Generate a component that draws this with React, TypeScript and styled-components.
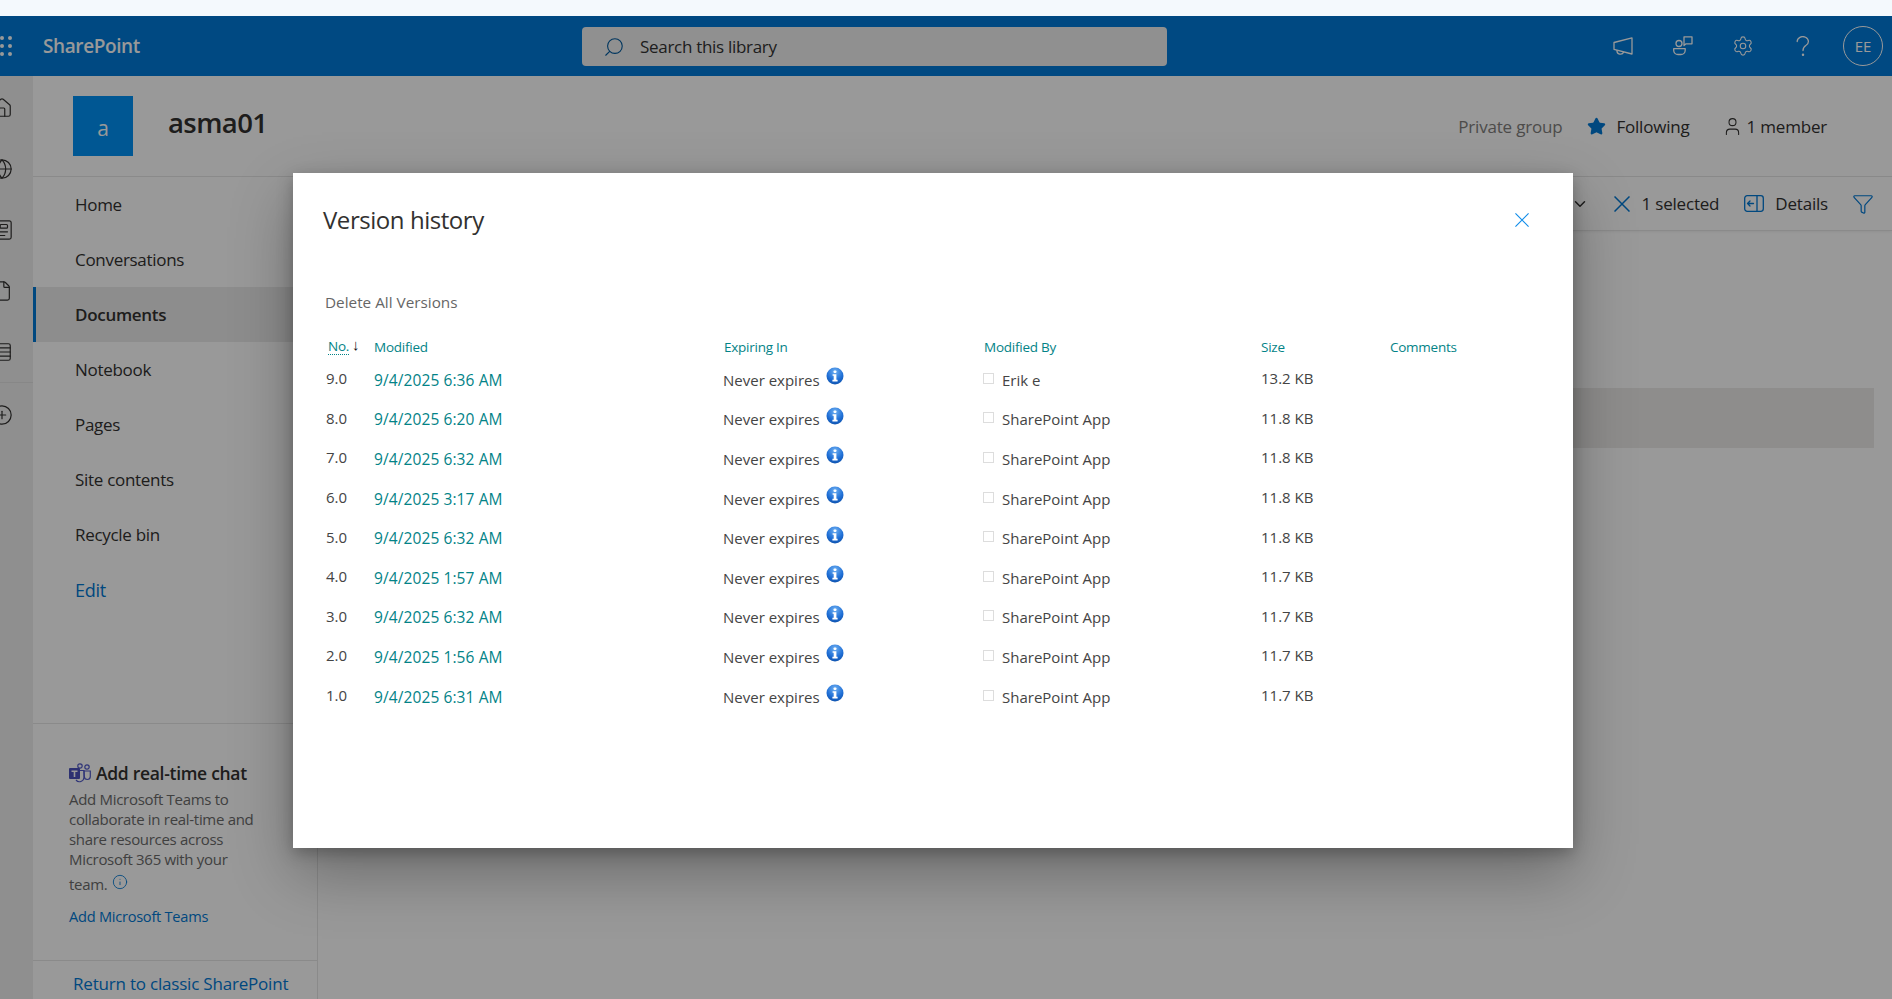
import styled, { createGlobalStyle } from "styled-components";
import { Home, Globe, Newspaper, File, Rows4, CirclePlus, Search, Settings, Star, User, ChevronDown, Filter, Info } from "lucide-react";

const GlobalStyle = createGlobalStyle`
  html, body {
    margin: 0;
    padding: 0;
    height: 100%;
    overflow: hidden;
    background: #f4f9fd;
    font-family: "Open Sans", "Noto Sans", sans-serif;
    color: #323130;
  }
`;

const Strip = styled.div`
  height: 16px;
  background: #f4f9fd;
`;
const Page = styled.div`
  position: relative;
  width: 1892px;
  height: 983px;
  overflow: hidden;
  background: #fff;
  display: flex;
  flex-direction: column;
`;
const SuiteBar = styled.header`
  height: 60px;
  flex: none;
  background: #007ad9;
  display: flex;
  align-items: center;
  color: #fff;
`;
const Waffle = styled.div`
  display: grid;
  grid-template-columns: repeat(2, 4px);
  gap: 4px 4px;
  width: 43px;
  span {
    width: 4px;
    height: 4px;
    border-radius: 50%;
    background: #fff;
  }
`;
const Brand = styled.div`
  font-size: 19px;
  font-weight: 600;
  width: 539px;
  letter-spacing: -0.4px;
`;
const SearchBox = styled.div`
  width: 585px;
  height: 39px;
  border-radius: 4px;
  background: #f0f0f0;
  display: flex;
  align-items: center;
  color: #333;
  font-size: 17px;
  letter-spacing: -0.3px;
  padding-top: 1px;
  box-sizing: border-box;
  svg {
    margin: 0 15px 0 21px;
    transform: scaleX(-1);
    color: #005a9e;
  }
`;
const SuiteIcons = styled.div`
  margin-left: auto;
  display: flex;
  align-items: center;
  margin-right: 9px;
`;
const SuiteIcon = styled.div`
  width: 60px;
  display: flex;
  justify-content: center;
`;
const Avatar = styled.div`
  width: 38px;
  height: 38px;
  margin-left: 10px;
  border: 1px solid #fff;
  border-radius: 50%;
  display: flex;
  align-items: center;
  justify-content: center;
  font-size: 15px;
`;
const Body = styled.div`
  flex: 1;
  display: flex;
  min-height: 0;
`;
const Rail = styled.nav`
  width: 33px;
  flex: none;
  background: #eeeeee;
  display: flex;
  flex-direction: column;
  align-items: flex-start;
  padding-top: 21px;
  overflow: hidden;
  color: #323130;
`;
const RailIcon = styled.div`
  height: 61px;
  flex: none;
  margin-left: -9px;
`;
const RailLine = styled.div`
  width: 100%;
  height: 1px;
  background: #e2e2e2;
  margin: -20px 0 21px;
`;
const Main = styled.div`
  flex: 1;
  display: flex;
  flex-direction: column;
  min-width: 0;
`;
const SiteHeader = styled.div`
  height: 101px;
  flex: none;
  display: flex;
  align-items: center;
  padding: 0 65px 1px 40px;
  border-bottom: 1px solid #e6e6e6;
  box-sizing: border-box;
`;
const SiteLogo = styled.div`
  width: 60px;
  height: 60px;
  background: #0092f5;
  color: #fff;
  font-size: 21px;
  display: flex;
  align-items: center;
  justify-content: center;
  padding-top: 4px;
  box-sizing: border-box;
`;
const SiteName = styled.h1`
  margin: 0 0 7px 35px;
  font-size: 27.5px;
  font-weight: 600;
  letter-spacing: -0.6px;
`;
const SiteMeta = styled.div`
  margin-left: auto;
  display: flex;
  align-items: center;
  font-size: 17px;
  letter-spacing: -0.2px;
  margin-top: 2px;
`;
const Muted = styled.span`
  color: #807e7c;
  margin-right: 25px;
`;
const MetaItem = styled.span<{ $gap: number }>`
  display: flex;
  align-items: center;
  gap: ${(p) => p.$gap}px;
  margin-right: ${(p) => (p.$gap > 8 ? 32 : 0)}px;
`;
const Columns = styled.div`
  flex: 1;
  display: flex;
  min-height: 0;
`;
const LeftNav = styled.aside`
  width: 285px;
  flex: none;
  box-sizing: border-box;
  border-right: 1px solid #e6e6e6;
  display: flex;
  flex-direction: column;
`;
const NavItem = styled.div<{ $active?: boolean; $link?: boolean }>`
  height: 55px;
  flex: none;
  box-sizing: border-box;
  display: flex;
  align-items: center;
  padding-left: ${(p) => (p.$active ? 39 : 42)}px;
  border-left: ${(p) => (p.$active ? "3px solid #0078d4" : "none")};
  background: ${(p) => (p.$active ? "#ebebeb" : "transparent")};
  font-weight: ${(p) => (p.$active ? 600 : 400)};
  font-size: ${(p) => (p.$link ? 18 : 17)}px;
  color: ${(p) => (p.$link ? "#0078d4" : "#323130")};
  letter-spacing: -0.3px;
`;
const TeamsCard = styled.section`
  margin-top: auto;
  height: 238px;
  box-sizing: border-box;
  border-top: 1px solid #e6e6e6;
  border-bottom: 1px solid #e6e6e6;
  padding: 37px 0 0 36px;
`;
const TeamsTitle = styled.div`
  display: flex;
  align-items: center;
  gap: 5px;
  font-size: 17.5px;
  font-weight: 600;
  letter-spacing: -0.3px;
  height: 24px;
`;
const TeamsText = styled.p`
  margin: 4px 0 0;
  width: 205px;
  font-size: 15px;
  line-height: 20px;
  color: #6b6b6b;
  letter-spacing: -0.3px;
`;
const TeamsEnd = styled.span`
  display: inline-flex;
  align-items: center;
  gap: 5px;
  line-height: 31px;
  svg {
    color: #0078d4;
    margin-bottom: 6px;
  }
`;
const TeamsLink = styled.div`
  font-size: 14.6px;
  color: #0078d4;
  margin-top: 6px;
  letter-spacing: -0.25px;
`;
const ClassicLink = styled.div`
  height: 38px;
  flex: none;
  padding-left: 40px;
  font-size: 17px;
  color: #0078d4;
  line-height: 46px;
  letter-spacing: -0.2px;
`;
const Content = styled.div`
  flex: 1;
  min-width: 0;
  display: flex;
  flex-direction: column;
`;
const CommandBar = styled.div`
  height: 54px;
  flex: none;
  box-sizing: border-box;
  border-bottom: 1px solid #e6e6e6;
  display: flex;
  align-items: center;
  justify-content: flex-end;
  padding: 0 18px 0 0;
  font-size: 17px;
  letter-spacing: -0.2px;
  box-shadow: 0 1px 3px rgba(0, 0, 0, 0.06);
`;
const Command = styled.span<{ $gap: number; $after: number }>`
  display: flex;
  align-items: center;
  gap: ${(p) => p.$gap}px;
  margin-right: ${(p) => p.$after}px;
  svg {
    color: #0078d4;
  }
`;
const DarkChevron = styled(ChevronDown)`
  color: #323130;
  margin-right: 25px;
`;
const SelectedRow = styled.div`
  height: 60px;
  margin: 157px 18px 0 0;
  background: #edebe9;
`;
const Dim = styled.div`
  position: absolute;
  inset: 0;
  background: rgba(0, 0, 0, 0.4);
`;
const Modal = styled.div`
  position: absolute;
  left: 293px;
  top: 157px;
  width: 1280px;
  height: 675px;
  box-sizing: border-box;
  background: #fff;
  box-shadow: 0 25px 58px rgba(0, 0, 0, 0.3), 0 5px 15px rgba(0, 0, 0, 0.25);
  padding: 30px 30px 0 30px;
`;
const ModalHead = styled.div`
  display: flex;
  align-items: center;
  justify-content: space-between;
  height: 33px;
`;
const ModalTitle = styled.h2`
  margin: 0;
  font-size: 24px;
  font-weight: 500;
  letter-spacing: -0.45px;
  color: #323130;
`;
const CloseIcon = styled.svg`
  color: #0f8ce9;
  margin: 2px 14px 0 0;
`;
const DeleteAll = styled.div`
  margin: 55px 0 0 2px;
  height: 22px;
  line-height: 22px;
  font-size: 15.3px;
  color: #666;
`;
const Grid = styled.div`
  display: grid;
  grid-template-columns: 48px 350px 260px 277px 129px 1fr;
  margin: 20px 0 0 3px;
`;
const HeadCell = styled.div`
  height: 27px;
  display: flex;
  align-items: center;
  font-size: 13.5px;
  color: #038387;
  letter-spacing: -0.25px;
`;
const NoLabel = styled.span`
  border-bottom: 1px dotted #038387;
  margin-left: 2px;
  line-height: 15px;
`;
const SortArrow = styled.span`
  color: #111;
  font-size: 15px;
  margin: 0 0 5px 3px;
  font-weight: 600;
`;
const Cell = styled.div<{ $raised?: boolean }>`
  height: 39.6px;
  display: flex;
  align-items: center;
  font-size: 15px;
  color: #444;
  padding-bottom: ${(p) => (p.$raised ? 3 : 0)}px;
  box-sizing: border-box;
`;
const DateCell = styled(Cell)`
  color: #038387;
  font-size: 15.5px;
  letter-spacing: 0.1px;
`;
const ExpiryCell = styled(Cell)`
  margin-left: -1px;
`;
const InfoDot = styled.svg`
  margin: 0 0 7px 6px;
`;
const Placeholder = styled.span`
  width: 9px;
  height: 9px;
  border: 1px solid #ddd;
  margin: 0 8px 3px -1px;
`;

const navItems = ["Home", "Conversations", "Documents", "Notebook", "Pages", "Site contents", "Recycle bin"];
const versions = [
  ["9.0", "9/4/2025 6:36 AM", "Erik e", "13.2 KB"],
  ["8.0", "9/4/2025 6:20 AM", "SharePoint App", "11.8 KB"],
  ["7.0", "9/4/2025 6:32 AM", "SharePoint App", "11.8 KB"],
  ["6.0", "9/4/2025 3:17 AM", "SharePoint App", "11.8 KB"],
  ["5.0", "9/4/2025 6:32 AM", "SharePoint App", "11.8 KB"],
  ["4.0", "9/4/2025 1:57 AM", "SharePoint App", "11.7 KB"],
  ["3.0", "9/4/2025 6:32 AM", "SharePoint App", "11.7 KB"],
  ["2.0", "9/4/2025 1:56 AM", "SharePoint App", "11.7 KB"],
  ["1.0", "9/4/2025 6:31 AM", "SharePoint App", "11.7 KB"],
];

function InfoBadge({ id }: { id: string }) {
  return (
    <InfoDot width="18" height="18" viewBox="0 0 18 18">
      <defs>
        <radialGradient id={id} cx="50%" cy="25%" r="80%">
          <stop offset="0" stopColor="#6fb0f2" />
          <stop offset="0.6" stopColor="#1f6fd6" />
          <stop offset="1" stopColor="#0d4fa8" />
        </radialGradient>
      </defs>
      <circle cx="9" cy="9" r="8.5" fill={`url(#${id})`} />
      <rect x="7.6" y="3.4" width="2.8" height="2.6" rx="0.8" fill="#fff" />
      <path d="M6.6 7.2h3.8v5.6h1.2v1.6H6.400v-1.6h1.300V8.800H6.600z" fill="#fff" />
    </InfoDot>
  );
}

function Cross({ size, width }: { size: number; width: number }) {
  return (
    <svg width={size} height={size} viewBox="0 0 16 16" fill="none" stroke="currentColor" strokeWidth={width}>
      <path d="M0.500 0.500l15 15M15.500 0.500l-15 15" />
    </svg>
  );
}

function MegaphoneIcon() {
  return (
    <svg width="20" height="18" viewBox="0 0 20 18" fill="none" stroke="currentColor" strokeWidth="1.300" strokeLinejoin="round">
      <path d="M1 5.500L19 0.800V17L1 12.300z" />
      <path d="M4 13.200a3.500 3.500 0 0 0 6.700 1.800" />
    </svg>
  );
}

function ChatIcon() {
  return (
    <svg width="20" height="20" viewBox="0 0 20 20" fill="none" stroke="currentColor" strokeWidth="1.300" strokeLinejoin="round">
      <circle cx="6" cy="7.500" r="3" />
      <path d="M0.700 12.700h11.500v1.500a4.300 4.300 0 0 1-4.300 4.300H5a4.300 4.300 0 0 1-4.300-4.300z" />
      <path d="M11 0.800h8v7h-6l-2 1.700z" />
    </svg>
  );
}

function HelpIcon() {
  return (
    <svg width="14" height="21" viewBox="0 0 14 21" fill="none" stroke="currentColor" strokeWidth="1.300" strokeLinecap="round">
      <path d="M1.200 5.500a5.600 4.800 0 1 1 8.600 4c-2 1.300-2.800 2.300-2.800 5" />
      <circle cx="7" cy="18.800" r="0.600" fill="currentColor" />
    </svg>
  );
}

function DetailsIcon() {
  return (
    <svg width="20" height="17" viewBox="0 0 20 17" fill="none" stroke="currentColor" strokeWidth="1.300" strokeLinecap="round" strokeLinejoin="round">
      <rect x="0.700" y="0.700" width="18.600" height="15.600" rx="2.500" />
      <path d="M13 0.700v15.600M9.500 8.500H3.500M6 6L3.500 8.500 6 11" />
    </svg>
  );
}

function TeamsLogo() {
  return (
    <svg width="22" height="20" viewBox="0 0 22 20">
      <circle cx="18" cy="4" r="2.200" fill="none" stroke="#5059c9" strokeWidth="1.200" />
      <path d="M15 8h6.300v5.500a3 3 0 0 1-6 0z" fill="none" stroke="#5059c9" strokeWidth="1.200" />
      <circle cx="11" cy="3" r="2.200" fill="none" stroke="#5059c9" strokeWidth="1.200" />
      <path d="M7 7.500h8v7a4.500 4.500 0 0 1-8 2.500" fill="none" stroke="#5059c9" strokeWidth="1.200" />
      <rect x="0" y="5" width="11" height="11" rx="1" fill="#4b53bc" />
      <path d="M2.500 7.500h6v1.500H6.300v5H4.700V9H2.500z" fill="#fff" />
    </svg>
  );
}

function Row({ no, date, by, size }: { no: string; date: string; by: string; size: string }) {
  return (
    <>
      <Cell $raised>{no}</Cell>
      <DateCell>{date}</DateCell>
      <ExpiryCell>
        Never expires
        <InfoBadge id={`info-${no}`} />
      </ExpiryCell>
      <Cell>
        <Placeholder />
        {by}
      </Cell>
      <Cell $raised>{size}</Cell>
      <Cell />
    </>
  );
}

export default function App() {
  return (
    <>
      <GlobalStyle />
      <Strip />
      <Page>
        <SuiteBar>
          <Waffle>
            {Array.from({ length: 6 }).map((_, i) => (
              <span key={i} />
            ))}
          </Waffle>
          <Brand>SharePoint</Brand>
          <SearchBox>
            <Search size={22} strokeWidth={1.2} />
            Search this library
          </SearchBox>
          <SuiteIcons>
            <SuiteIcon>
              <MegaphoneIcon />
            </SuiteIcon>
            <SuiteIcon>
              <ChatIcon />
            </SuiteIcon>
            <SuiteIcon>
              <Settings size={22} strokeWidth={1.2} />
            </SuiteIcon>
            <SuiteIcon>
              <HelpIcon />
            </SuiteIcon>
            <Avatar>EE</Avatar>
          </SuiteIcons>
        </SuiteBar>
        <Body>
          <Rail>
            <RailIcon>
              <Home size={22} strokeWidth={1.3} />
            </RailIcon>
            <RailIcon>
              <Globe size={22} strokeWidth={1.3} />
            </RailIcon>
            <RailIcon>
              <Newspaper size={22} strokeWidth={1.3} />
            </RailIcon>
            <RailIcon>
              <File size={22} strokeWidth={1.3} />
            </RailIcon>
            <RailIcon>
              <Rows4 size={22} strokeWidth={1.3} />
            </RailIcon>
            <RailLine />
            <RailIcon>
              <CirclePlus size={22} strokeWidth={1.3} />
            </RailIcon>
          </Rail>
          <Main>
            <SiteHeader>
              <SiteLogo>a</SiteLogo>
              <SiteName>asma01</SiteName>
              <SiteMeta>
                <Muted>Private group</Muted>
                <MetaItem $gap={10}>
                  <Star size={19} fill="#0078d4" color="#0078d4" />
                  Following
                </MetaItem>
                <MetaItem $gap={4}>
                  <User size={21} strokeWidth={1.2} />1 member
                </MetaItem>
              </SiteMeta>
            </SiteHeader>
            <Columns>
              <LeftNav>
                {navItems.map((item) => (
                  <NavItem key={item} $active={item === "Documents"}>
                    {item}
                  </NavItem>
                ))}
                <NavItem $link>Edit</NavItem>
                <TeamsCard>
                  <TeamsTitle>
                    <TeamsLogo />
                    Add real-time chat
                  </TeamsTitle>
                  <TeamsText>
                    Add Microsoft Teams to collaborate in real-time and share resources across Microsoft 365 with your{" "}
                    <TeamsEnd>
                      team.
                      <Info size={16} strokeWidth={1.3} />
                    </TeamsEnd>
                  </TeamsText>
                  <TeamsLink>Add Microsoft Teams</TeamsLink>
                </TeamsCard>
                <ClassicLink>Return to classic SharePoint</ClassicLink>
              </LeftNav>
              <Content>
                <CommandBar>
                  <DarkChevron size={18} />
                  <Command $gap={12} $after={25}>
                    <Cross size={16} width={1.5} />1 selected
                  </Command>
                  <Command $gap={11} $after={24}>
                    <DetailsIcon />
                    Details
                  </Command>
                  <Filter size={22} strokeWidth={1.3} color="#0078d4" />
                </CommandBar>
                <SelectedRow />
              </Content>
            </Columns>
          </Main>
        </Body>
        <Dim />
        <Modal>
          <ModalHead>
            <ModalTitle>Version history</ModalTitle>
            <CloseIcon as="span">
              <Cross size={14} width={1.3} />
            </CloseIcon>
          </ModalHead>
          <DeleteAll>Delete All Versions</DeleteAll>
          <Grid>
            <HeadCell>
              <NoLabel>No.</NoLabel>
              <SortArrow>↓</SortArrow>
            </HeadCell>
            <HeadCell>Modified</HeadCell>
            <HeadCell>Expiring In</HeadCell>
            <HeadCell>Modified By</HeadCell>
            <HeadCell>Size</HeadCell>
            <HeadCell>Comments</HeadCell>
            {versions.map(([no, date, by, size]) => (
              <Row key={no} no={no} date={date} by={by} size={size} />
            ))}
          </Grid>
        </Modal>
      </Page>
    </>
  );
}
